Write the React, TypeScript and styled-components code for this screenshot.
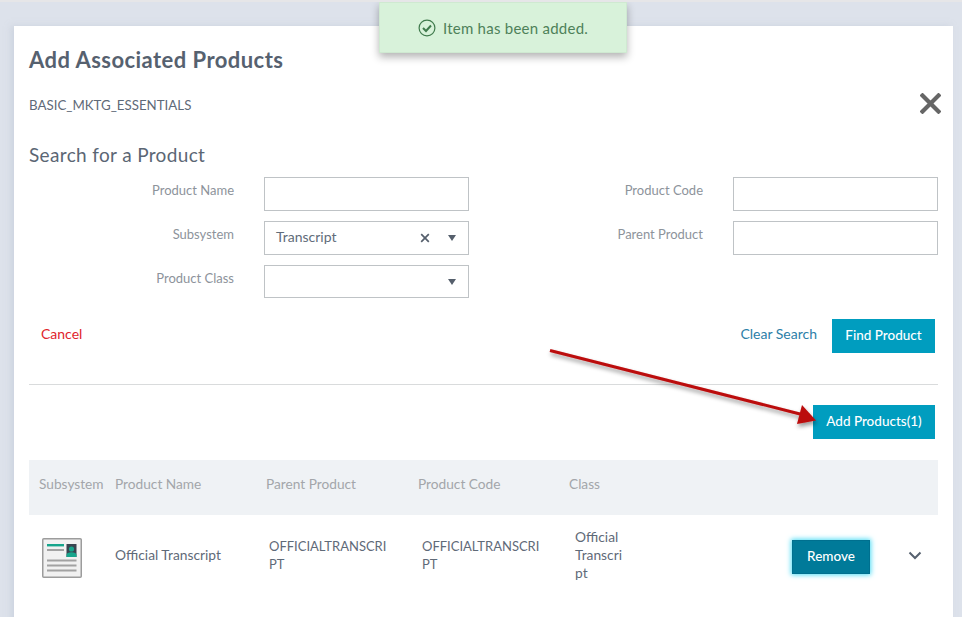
import styled, { createGlobalStyle } from "styled-components";

const GlobalStyle = createGlobalStyle`
html, body {
  margin: 0;
  height: 617px;
  overflow: hidden;
  background: #dde2eb;
  font-family: Lato, "Open Sans", sans-serif;
  color: #5a6675;
}
* { box-sizing: border-box; }
`;

const Page = styled.div`
  position: relative;
  height: 617px;
  overflow: hidden;
  border-top: 2px solid #e6e6e8;
  padding: 24px 9px 0 14px;
`;

const Toast = styled.div`
  position: absolute;
  top: 0;
  left: 379px;
  width: 248px;
  height: 51px;
  display: flex;
  align-items: center;
  justify-content: center;
  gap: 7px;
  background: #d8f2da;
  border: 1px solid #cfe9d1;
  box-shadow: 0 4px 8px rgba(0, 0, 0, 0.3);
  color: #4e8159;
  font-size: 15px;
  letter-spacing: 0.25px;
`;

const Panel = styled.div`
  background: #fff;
  height: 640px;
  padding: 0 15px;
  box-shadow: -3px 0 6px rgba(190, 198, 212, 0.5);
`;

const Title = styled.h1`
  margin: 0;
  padding-top: 20px;
  font-size: 22px;
  line-height: 28px;
  font-weight: 700;
  color: #56616f;
  letter-spacing: 0.45px;
`;

const CodeRow = styled.div`
  display: flex;
  align-items: flex-start;
  justify-content: space-between;
  margin-top: 22px;
  height: 32px;
  font-size: 13.3px;
  line-height: 18px;
  color: #5f6a78;
`;

const CloseButton = styled.span`
  display: block;
  margin: -3px -3px 0 0;
  width: 21px;
  height: 21px;
  color: #666;
`;

const SearchTitle = styled.h2`
  margin: 0;
  padding-top: 14px;
  font-size: 19px;
  line-height: 26px;
  font-weight: 400;
  color: #5b6674;
  letter-spacing: 0.35px;
`;

const FormGrid = styled.div`
  display: grid;
  grid-template-columns: 205px 205px 204px 205px;
  column-gap: 30px;
  row-gap: 10px;
  margin-top: 9px;
`;

const Label = styled.label`
  text-align: right;
  font-size: 13px;
  line-height: 18px;
  padding-top: 4px;
  color: #8d939b;
`;

const Field = styled.div<{ $short?: boolean }>`
  display: flex;
  align-items: center;
  height: ${(p) => (p.$short ? "33px" : "34px")};
  border: 1px solid #bfc3c6;
  background: #fff;
  padding: 0 11px;
  font-size: 14px;
  color: #616c7a;
`;

const FieldValue = styled.span`
  flex: 1;
  padding-bottom: 3px;
`;

const ClearIcon = styled.span`
  display: flex;
  width: 10px;
  height: 10px;
  margin-right: 18px;
  color: #555f6c;
`;

const Caret = styled.span`
  width: 0;
  height: 0;
  margin-right: 1px;
  margin-left: auto;
  border-left: 4px solid transparent;
  border-right: 4px solid transparent;
  border-top: 6px solid #555f6c;
`;

const ActionRow = styled.div`
  display: flex;
  align-items: center;
  margin-top: 21px;
  padding: 0 3px 0 12px;
  height: 34px;
`;

const CancelLink = styled.a`
  font-size: 14px;
  color: #e0242c;
  margin-right: auto;
  margin-bottom: 6px;
`;

const ClearLink = styled.a`
  font-size: 14px;
  color: #2c80a8;
  margin-right: 15px;
  margin-bottom: 5px;
`;

const PrimaryButton = styled.button<{ $width: number }>`
  width: ${(p) => p.$width}px;
  height: 34px;
  border: 0;
  padding: 0 0 3px;
  background: #009dbf;
  color: #fff;
  font-family: inherit;
  font-size: 13.5px;
  font-weight: 500;
`;

const Divider = styled.hr`
  margin: 31px 0 20px;
  border: 0;
  border-top: 1px solid #d9dbdc;
`;

const AddRow = styled.div`
  display: flex;
  justify-content: flex-end;
  padding-right: 3px;
`;

const Table = styled.div`
  margin-top: 21px;
`;

const Columns = styled.div`
  display: grid;
  grid-template-columns: 76px 151px 152px 151px 1fr;
  align-items: center;
`;

const HeaderRow = styled(Columns)`
  height: 55px;
  background: #eff2f5;
  padding-bottom: 8px;
`;

const HeaderCell = styled.div`
  padding: 0 0 0 10px;
  font-size: 13.7px;
  line-height: 19px;
  color: #a3a6aa;
  word-break: break-all;
`;

const BodyRow = styled(Columns)`
  height: 80px;
  font-size: 13.8px;
  line-height: 18px;
  color: #5f6a78;
`;

const IconCell = styled.div`
  display: flex;
  padding-left: 13px;
  margin-top: 5px;
`;

const NameCell = styled.div`
  padding-left: 10px;
`;

const CodeCell = styled.div<{ $indent: number }>`
  padding-left: ${(p) => p.$indent}px;
  width: ${(p) => p.$indent + 122}px;
  font-size: 13px;
  word-break: break-all;
`;

const ClassCell = styled.div`
  display: flex;
  align-items: center;
  padding-left: 16px;
`;

const ClassText = styled.div`
  width: 50px;
  word-break: break-all;
`;

const RemoveButton = styled.button`
  width: 78px;
  height: 34px;
  margin: 4px 0 0 167px;
  padding: 0 0 2px;
  border: 1px solid #00708f;
  background: #007a99;
  color: #fff;
  font-family: inherit;
  font-size: 13.5px;
  font-weight: 500;
  box-shadow: 0 0 5px 1px #4fdcf5;
`;

const Chevron = styled.span`
  display: flex;
  margin-left: 38px;
  color: #56616f;
`;

const ArrowLayer = styled.svg`
  position: absolute;
  left: 0;
  top: -2px;
  width: 962px;
  height: 617px;
  pointer-events: none;
`;

function TranscriptIcon() {
  return (
    <svg width="40" height="40" viewBox="0 0 40 40">
      <rect x="0.75" y="0.75" width="38.5" height="38.5" rx="1" fill="#f1f1f1" stroke="#9c9c9c" strokeWidth="1.5" />
      <rect x="5" y="6" width="17" height="2.4" fill="#17a58c" />
      <rect x="5" y="11" width="17" height="2" fill="#a2a2a2" />
      <rect x="24.5" y="6" width="10" height="13" fill="#3a4450" />
      <circle cx="29.5" cy="11" r="2.6" fill="#17a58c" />
      <path d="M24.5 19v-2.2c0-1.6 2-2.6 5-2.6s5 1 5 2.6V19z" fill="#17a58c" />
      <rect x="5" y="21.5" width="29.5" height="2" fill="#a2a2a2" />
      <rect x="5" y="26.5" width="29.5" height="2" fill="#a2a2a2" />
      <rect x="5" y="31.5" width="29.5" height="2" fill="#a2a2a2" />
    </svg>
  );
}

export default function App() {
  return (
    <>
      <GlobalStyle />
      <Page>
        <Panel>
          <Title>Add Associated Products</Title>
          <CodeRow>
            <span>BASIC_MKTG_ESSENTIALS</span>
            <CloseButton>
              <svg width="21" height="21" viewBox="0 0 21 21">
                <path d="M2.5 2.5l16 16M18.5 2.5l-16 16" stroke="currentColor" strokeWidth="4.2" strokeLinecap="square" fill="none" />
              </svg>
            </CloseButton>
          </CodeRow>
          <SearchTitle>Search for a Product</SearchTitle>
          <FormGrid>
            <Label>Product Name</Label>
            <Field />
            <Label>Product Code</Label>
            <Field />
            <Label>Subsystem</Label>
            <Field>
              <FieldValue>Transcript</FieldValue>
              <ClearIcon>
                <svg width="10" height="10" viewBox="0 0 10 10">
                  <path d="M1.2 1.2l7.6 7.6M8.8 1.2l-7.6 7.6" stroke="currentColor" strokeWidth="1.7" fill="none" />
                </svg>
              </ClearIcon>
              <Caret />
            </Field>
            <Label>Parent Product</Label>
            <Field />
            <Label>Product Class</Label>
            <Field $short>
              <Caret />
            </Field>
          </FormGrid>
          <ActionRow>
            <CancelLink>Cancel</CancelLink>
            <ClearLink>Clear Search</ClearLink>
            <PrimaryButton $width={103}>Find Product</PrimaryButton>
          </ActionRow>
          <Divider />
          <AddRow>
            <PrimaryButton $width={122}>Add Products(1)</PrimaryButton>
          </AddRow>
          <Table>
            <HeaderRow>
              <HeaderCell>Subsystem</HeaderCell>
              <HeaderCell>Product Name</HeaderCell>
              <HeaderCell>Parent Product</HeaderCell>
              <HeaderCell>Product Code</HeaderCell>
              <HeaderCell>Class</HeaderCell>
            </HeaderRow>
            <BodyRow>
              <IconCell>
                <TranscriptIcon />
              </IconCell>
              <NameCell>Official Transcript</NameCell>
              <CodeCell $indent={13}>OFFICIALTRANSCRIPT</CodeCell>
              <CodeCell $indent={14}>OFFICIALTRANSCRIPT</CodeCell>
              <ClassCell>
                <ClassText>Official Transcript</ClassText>
                <RemoveButton>Remove</RemoveButton>
                <Chevron>
                  <svg width="14" height="9" viewBox="0 0 14 9">
                    <path d="M1.5 1.5L7 7l5.5-5.5" stroke="currentColor" strokeWidth="2" fill="none" />
                  </svg>
                </Chevron>
              </ClassCell>
            </BodyRow>
          </Table>
        </Panel>
        <Toast>
          <svg width="18" height="18" viewBox="0 0 18 18">
            <circle cx="9" cy="9" r="7.9" stroke="#3f7a4c" strokeWidth="1.2" fill="none" />
            <path d="M5 9l3 3 5-5.5" stroke="#3f7a4c" strokeWidth="2" fill="none" />
          </svg>
          <span>Item has been added.</span>
        </Toast>
        <ArrowLayer viewBox="0 0 962 617">
          <defs>
            <filter id="arrowShadow" x="-10%" y="-30%" width="120%" height="170%">
              <feDropShadow dx="1" dy="3" stdDeviation="2" floodColor="#000" floodOpacity="0.4" />
            </filter>
          </defs>
          <g filter="url(#arrowShadow)" fill="#bb0a0a">
            <path d="M550 350.5L802 414.5" stroke="#bb0a0a" strokeWidth="3" fill="none" />
            <path d="M816 420.5L802 405L797 424Z" />
          </g>
        </ArrowLayer>
      </Page>
    </>
  );
}
